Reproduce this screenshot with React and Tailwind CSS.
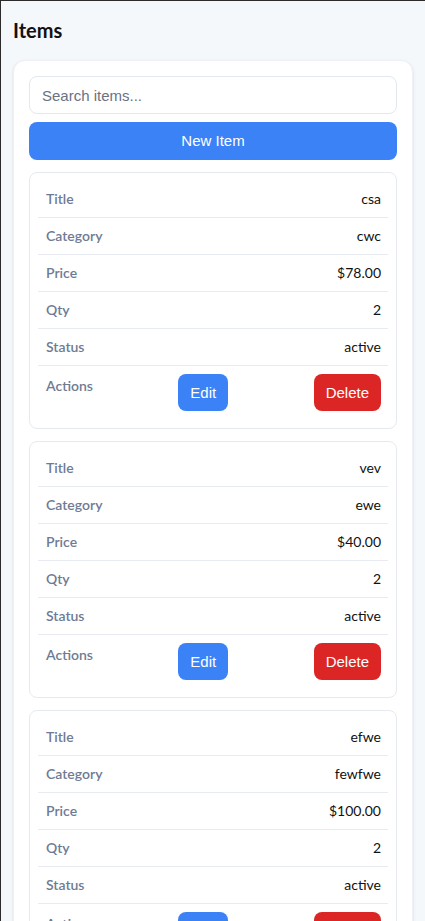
import React from "react";

const items = [
  { title: "csa", category: "cwc", price: "$78.00", qty: 2, status: "active" },
  { title: "vev", category: "ewe", price: "$40.00", qty: 2, status: "active" },
  { title: "efwe", category: "fewfwe", price: "$100.00", qty: 2, status: "active" },
];

function Row({ label, value }) {
  return (
    <div className="flex items-center justify-between pl-2 pr-[7px] py-2 border-b border-[#e8ecf2] text-sm leading-5">
      <span className="font-semibold text-[#6e7b93]">{label}</span>
      <span className="text-[#111]">{value}</span>
    </div>
  );
}

function ItemCard({ item }) {
  return (
    <div className="bg-white border border-[#e6eaf0] rounded-lg p-2">
      <Row label="Title" value={item.title} />
      <Row label="Category" value={item.category} />
      <Row label="Price" value={item.price} />
      <Row label="Qty" value={item.qty} />
      <Row label="Status" value={item.status} />
      <div className="flex items-start justify-between pl-2 pr-[7px] pt-2 pb-[9px] text-sm leading-5">
        <span className="font-semibold text-[#6e7b93] pt-[2px]">Actions</span>
        <button className="h-[37px] px-3 rounded-lg bg-[#3b82f6] text-white text-[15px] font-['Liberation_Sans',Arial,sans-serif]">
          Edit
        </button>
        <button className="h-[37px] px-3 rounded-lg bg-[#dc2626] text-white text-[15px] font-['Liberation_Sans',Arial,sans-serif]">
          Delete
        </button>
      </div>
    </div>
  );
}

export default function App() {
  return (
    <div className="min-h-[921px] bg-[#f5f8fb] border-l border-t border-[#2b2b2b] px-[12px] pt-[15px] font-['Lato','Noto_Sans',sans-serif]">
      <h1 className="text-xl font-bold text-[#111] mb-4">Items</h1>
      <div className="bg-white rounded-xl border border-[#edf0f5] shadow-sm p-[15px] flex flex-col">
        <input
          type="text"
          placeholder="Search items..."
          className="h-[38px] w-full rounded-lg border border-[#e2e8f0] px-3 text-[15px] text-[#111] placeholder:text-[#6b7280] font-['Liberation_Sans',Arial,sans-serif] outline-none"
        />
        <button className="mt-2 h-[38px] w-full rounded-lg bg-[#3b82f6] text-white text-[15px] font-['Liberation_Sans',Arial,sans-serif]">
          New Item
        </button>
        <div className="mt-[12px] flex flex-col gap-3">
          {items.map((item, i) => (
            <ItemCard key={i} item={item} />
          ))}
        </div>
      </div>
    </div>
  );
}
